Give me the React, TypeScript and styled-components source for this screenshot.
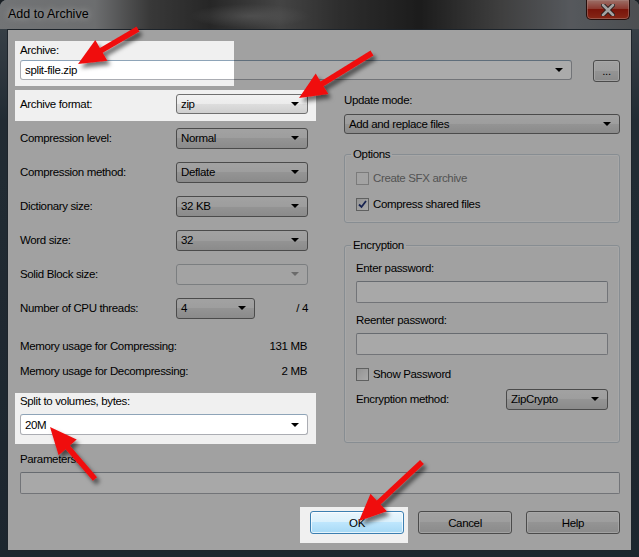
import React from 'react';
import styled, { createGlobalStyle, css } from 'styled-components';

const GlobalStyle = createGlobalStyle`
  html, body {
    margin: 0;
    padding: 0;
    background: #1a1f24;
  }
  body {
    width: 639px;
    height: 557px;
    overflow: hidden;
    font-family: "Liberation Sans", Arial, sans-serif;
    font-size: 11.5px;
    letter-spacing: -0.35px;
    color: #000;
  }
`;

const Window = styled.div`
  position: relative;
  width: 639px;
  height: 557px;
  display: flex;
  flex-direction: column;
  background: linear-gradient(180deg, #5c6872 0, #33414d 120px, #2b3945 100%);
  border-radius: 7px 7px 0 0;
  overflow: hidden;
`;

const TitleBar = styled.div`
  height: 29px;
  flex: none;
  display: flex;
  align-items: flex-start;
  justify-content: space-between;
  background:
    radial-gradient(ellipse 60px 12px at 250px 16px, rgba(150, 150, 150, 0.5), transparent),
    linear-gradient(90deg, #aaadb0 0, #a2a4a6 95px, #555 150px, #3a3a3a 210px, #666 280px,
      #444 340px, #2a2a2a 420px, #5e5e5e 500px, #80848a 570px, #72767a 639px);
`;

const Title = styled.span`
  padding: 7px 0 0 8px;
  font-size: 12.5px;
  letter-spacing: 0;
  text-shadow: 0 0 6px rgba(255, 255, 255, 0.9), 0 0 10px rgba(255, 255, 255, 0.6);
`;

const CloseButton = styled.div`
  width: 42px;
  height: 19px;
  margin-right: 9px;
  display: flex;
  align-items: center;
  justify-content: center;
  border: 1px solid #3a1512;
  border-top: none;
  border-radius: 0 0 5px 5px;
  background: linear-gradient(180deg, #e8a69a 0, #d0584a 45%, #b52010 50%, #c83a22 100%);
  box-shadow: inset 0 0 0 1px rgba(255, 200, 190, 0.5);
`;

const Client = styled.div`
  flex: 1;
  margin: 0 7px 6px 7px;
  border: 1px solid #2c3740;
  background: #f0f0f0;
  padding: 13px 11px 0 12px;
  display: flex;
  flex-direction: column;
`;

const Label = styled.div<{ $disabled?: boolean }>`
  height: 15px;
  line-height: 15px;
  white-space: nowrap;
  color: ${p => (p.$disabled ? '#8a8a8a' : '#000')};
`;

const ArchiveRow = styled.div`
  display: flex;
  align-items: flex-start;
  gap: 21px;
  margin-top: 2px;
`;

const comboVariants = {
  list: css`
    border: 1px solid #707070;
    background: linear-gradient(180deg, #f2f2f2 0, #ebebeb 50%, #dddddd 50%, #cfcfcf 100%);
  `,
  edit: css`
    border: 1px solid #abadb3;
    border-top-color: #8ea4b8;
    background: #fff;
  `,
  disabled: css`
    border: 1px solid #b8bcbf;
    background: #f4f4f4;
    color: #8a8a8a;
  `,
};

type ComboVariant = keyof typeof comboVariants;

const ComboBox = styled.div<{ $variant: ComboVariant; $w?: number; $h?: number; $grow?: boolean }>`
  box-sizing: border-box;
  flex: none;
  ${p => (p.$w ? `width: ${p.$w}px;` : p.$grow ? 'flex: 1 1 auto; min-width: 0;' : 'width: 100%;')}
  height: ${p => p.$h ?? 21}px;
  border-radius: 3px;
  display: flex;
  align-items: center;
  padding: 0 8px 0 4px;
  ${p => comboVariants[p.$variant]}
`;

const ComboText = styled.span`
  flex: 1;
  white-space: nowrap;
`;

const Arrow = styled.span<{ $disabled?: boolean }>`
  width: 0;
  height: 0;
  border-left: 4px solid transparent;
  border-right: 4px solid transparent;
  border-top: 4px solid ${p => (p.$disabled ? '#a0a0a0' : '#000')};
`;

type ComboProps = { value?: string; variant?: ComboVariant; w?: number; h?: number; grow?: boolean };

const Combo = ({ value = '', variant = 'list', w, h, grow }: ComboProps) => (
  <ComboBox $variant={variant} $w={w} $h={h} $grow={grow}>
    <ComboText>{value}</ComboText>
    <Arrow $disabled={variant === 'disabled'} />
  </ComboBox>
);

const Button = styled.div<{ $default?: boolean; $w: number; $h: number }>`
  box-sizing: border-box;
  width: ${p => p.$w}px;
  height: ${p => p.$h}px;
  border-radius: 3px;
  display: flex;
  align-items: center;
  justify-content: center;
  border: 1px solid ${p => (p.$default ? '#3c7fb1' : '#707070')};
  background: ${p =>
    p.$default
      ? 'linear-gradient(180deg, #eaf6fd 0, #d9f0fc 50%, #bee6fd 50%, #a7d9f5 100%)'
      : 'linear-gradient(180deg, #f2f2f2 0, #ebebeb 50%, #dddddd 50%, #cfcfcf 100%)'};
  box-shadow: inset 0 0 0 1px rgba(255, 255, 255, 0.7);
`;

const Columns = styled.div`
  display: flex;
  align-items: flex-start;
  gap: 36px;
  margin-top: 5px;
`;

const LeftColumn = styled.div`
  width: 288px;
  flex: none;
  display: flex;
  flex-direction: column;
`;

const RightColumn = styled.div`
  flex: 1;
  display: flex;
  flex-direction: column;
`;

const FieldRow = styled.div`
  height: 34px;
  display: grid;
  grid-template-columns: 156px 1fr;
  align-items: center;
`;

const ThreadCell = styled.div`
  display: flex;
  align-items: center;
  justify-content: space-between;
`;

const InfoRow = styled.div`
  height: 25px;
  display: flex;
  align-items: center;
  justify-content: space-between;
  padding-right: 1px;
`;

const MemoryBlock = styled.div`
  margin-top: 8px;
`;

const SplitBlock = styled.div`
  margin-top: 11px;
  display: flex;
  flex-direction: column;
  gap: 5px;
`;

const UpdateLabel = styled(Label)`
  margin-top: 6px;
  margin-bottom: 6px;
`;

const Group = styled.fieldset<{ $gap: number; $pt: number; $pb: number }>`
  margin: ${p => p.$gap}px 0 0 0;
  padding: ${p => p.$pt}px 11px ${p => p.$pb}px 11px;
  border: 1px solid #c9d3da;
  border-radius: 3px;
  box-shadow: inset 0 0 0 1px rgba(255, 255, 255, 0.6);
  min-width: 0;
`;

const Legend = styled.legend`
  margin-left: -5px;
  padding: 0 2px;
  line-height: 15px;
`;

const CheckRow = styled.div<{ $disabled?: boolean; $mt?: number }>`
  height: 26px;
  margin-top: ${p => p.$mt ?? 0}px;
  display: flex;
  align-items: center;
  gap: 4px;
  color: ${p => (p.$disabled ? '#7c7c7c' : '#000')};
`;

const CheckBox = styled.span<{ $disabled?: boolean }>`
  box-sizing: border-box;
  width: 13px;
  height: 13px;
  flex: none;
  display: flex;
  align-items: center;
  justify-content: center;
  border: 1px solid ${p => (p.$disabled ? '#b8b8b8' : '#8e8f8f')};
  background: ${p => (p.$disabled ? '#f4f4f4' : 'linear-gradient(135deg, #dcdcdc 0, #fefefe 100%)')};
`;

const Check = ({ label, checked, disabled, mt }: { label: string; checked?: boolean; disabled?: boolean; mt?: number }) => (
  <CheckRow $disabled={disabled} $mt={mt}>
    <CheckBox $disabled={disabled}>
      {checked && (
        <svg width="9" height="9" viewBox="0 0 9 9">
          <path d="M1 4.5 L3.5 7 L8 1" fill="none" stroke="#24367a" strokeWidth="1.8" />
        </svg>
      )}
    </CheckBox>
    {label}
  </CheckRow>
);

const EditBox = styled.div`
  box-sizing: border-box;
  height: 22px;
  border: 1px solid #abadb3;
  border-top-color: #9aa0a8;
  border-radius: 2px;
  background: #fbfbfb;
`;

const GroupLabel = styled(Label)<{ $mt: number }>`
  margin-top: ${p => p.$mt}px;
  margin-bottom: 5px;
`;

const MethodRow = styled.div`
  height: 24px;
  display: flex;
  align-items: center;
  justify-content: space-between;
`;

const ParamsBlock = styled.div`
  margin-top: 9px;
  display: flex;
  flex-direction: column;
  gap: 5px;
`;

const ButtonRow = styled.div`
  margin-top: 17px;
  display: flex;
  justify-content: flex-end;
  gap: 14px;
`;

const Overlay = styled.svg`
  position: absolute;
  left: 0;
  top: 0;
  pointer-events: none;
`;

const holes = [
  [15, 41, 234, 86],
  [15, 90, 316, 121],
  [15, 393, 316, 444],
  [300, 507, 408, 543],
];

const dimPath =
  'M0 0H639V557H0Z ' + holes.map(([x1, y1, x2, y2]) => `M${x1} ${y1}V${y2}H${x2}V${y1}Z`).join(' ');

const arrows: [number, number, number, number][] = [
  [138, 29, 78, 64],
  [372, 53, 299, 98],
  [95, 479, 50, 427],
  [422, 462, 359, 521],
];

const arrowPoints = ([tx, ty, px, py]: [number, number, number, number]) => {
  const dx = px - tx;
  const dy = py - ty;
  const len = Math.hypot(dx, dy);
  const ux = dx / len;
  const uy = dy / len;
  const nx = -uy;
  const ny = ux;
  const L = 27;
  const W = 12;
  const s = 2.8;
  const bx = px - ux * L;
  const by = py - uy * L;
  const pts = [
    [tx + nx * s, ty + ny * s],
    [bx + nx * s, by + ny * s],
    [bx + nx * W, by + ny * W],
    [px, py],
    [bx - nx * W, by - ny * W],
    [bx - nx * s, by - ny * s],
    [tx - nx * s, ty - ny * s],
  ];
  return pts.map(([x, y]) => `${x.toFixed(1)},${y.toFixed(1)}`).join(' ');
};

export default function App() {
  return (
    <>
      <GlobalStyle />
      <Window>
        <TitleBar>
          <Title>Add to Archive</Title>
          <CloseButton>
            <svg width="14" height="12" viewBox="0 0 14 12">
              <path d="M2 1 L12 11 M12 1 L2 11" stroke="#3a2a28" strokeWidth="4.5" strokeLinecap="round" />
              <path d="M2 1 L12 11 M12 1 L2 11" stroke="#f4f4f4" strokeWidth="2.6" strokeLinecap="round" />
            </svg>
          </CloseButton>
        </TitleBar>
        <Client>
          <Label>Archive:</Label>
          <ArchiveRow>
            <Combo value="split-file.zip" variant="edit" h={20} grow />
            <Button $w={27} $h={22}>...</Button>
          </ArchiveRow>
          <Columns>
            <LeftColumn>
              <FieldRow>
                <Label>Archive format:</Label>
                <Combo value="zip" h={20} />
              </FieldRow>
              <FieldRow>
                <Label>Compression level:</Label>
                <Combo value="Normal" />
              </FieldRow>
              <FieldRow>
                <Label>Compression method:</Label>
                <Combo value="Deflate" />
              </FieldRow>
              <FieldRow>
                <Label>Dictionary size:</Label>
                <Combo value="32 KB" />
              </FieldRow>
              <FieldRow>
                <Label>Word size:</Label>
                <Combo value="32" />
              </FieldRow>
              <FieldRow>
                <Label>Solid Block size:</Label>
                <Combo variant="disabled" />
              </FieldRow>
              <FieldRow>
                <Label>Number of CPU threads:</Label>
                <ThreadCell>
                  <Combo value="4" w={79} />
                  <span>/ 4</span>
                </ThreadCell>
              </FieldRow>
              <MemoryBlock>
                <InfoRow>
                  <span>Memory usage for Compressing:</span>
                  <span>131 MB</span>
                </InfoRow>
                <InfoRow>
                  <span>Memory usage for Decompressing:</span>
                  <span>2 MB</span>
                </InfoRow>
              </MemoryBlock>
              <SplitBlock>
                <Label>Split to volumes, bytes:</Label>
                <Combo value="20M" variant="edit" />
              </SplitBlock>
            </LeftColumn>
            <RightColumn>
              <UpdateLabel>Update mode:</UpdateLabel>
              <Combo value="Add and replace files" h={20} />
              <Group $gap={13} $pt={3} $pb={5}>
                <Legend>Options</Legend>
                <Check label="Create SFX archive" disabled />
                <Check label="Compress shared files" checked />
              </Group>
              <Group $gap={15} $pt={0} $pb={31}>
                <Legend>Encryption</Legend>
                <GroupLabel $mt={8}>Enter password:</GroupLabel>
                <EditBox />
                <GroupLabel $mt={10}>Reenter password:</GroupLabel>
                <EditBox />
                <Check label="Show Password" mt={6} />
                <MethodRow>
                  <Label>Encryption method:</Label>
                  <Combo value="ZipCrypto" w={102} />
                </MethodRow>
              </Group>
            </RightColumn>
          </Columns>
          <ParamsBlock>
            <Label>Parameters:</Label>
            <EditBox />
          </ParamsBlock>
          <ButtonRow>
            <Button $default $w={94} $h={23}>OK</Button>
            <Button $w={94} $h={23}>Cancel</Button>
            <Button $w={94} $h={23}>Help</Button>
          </ButtonRow>
        </Client>
        <Overlay width="639" height="557" viewBox="0 0 639 557">
          <path d={dimPath} fill="rgba(0,0,0,0.33)" fillRule="evenodd" />
        </Overlay>
        <Overlay width="639" height="557" viewBox="0 0 639 557">
          <defs>
            <filter id="arrowShadow" x="-30%" y="-30%" width="160%" height="160%">
              <feDropShadow dx="3" dy="4" stdDeviation="2" floodColor="#000" floodOpacity="0.55" />
            </filter>
          </defs>
          {arrows.map((a, i) => (
            <polygon key={i} points={arrowPoints(a)} fill="#f01010" filter="url(#arrowShadow)" />
          ))}
        </Overlay>
      </Window>
    </>
  );
}
